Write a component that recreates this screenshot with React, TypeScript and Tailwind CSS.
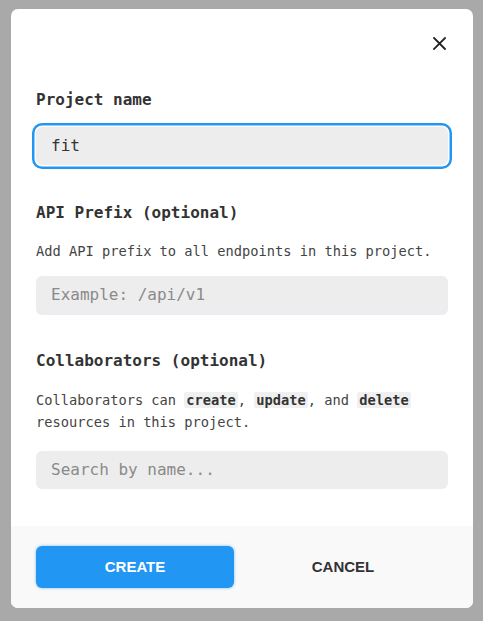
import React from "react";

const mono = { fontFamily: '"DejaVu Sans Mono", "Liberation Mono", monospace' };
const sans = { fontFamily: '"Liberation Sans", Arial, sans-serif' };

function Code({ children }: { children: React.ReactNode }) {
  return (
    <code className="bg-[#f0f0f0] rounded-[2px] px-[2px] font-bold text-[#333]" style={mono}>
      {children}
    </code>
  );
}

export default function App() {
  return (
    <div className="w-[483px] h-[621px] bg-[#a9a9a9] overflow-hidden pt-[9px] pl-[11px]" style={mono}>
      <div className="w-[462px] h-[599px] bg-white rounded-[7px] overflow-hidden flex flex-col">
        <div className="flex justify-end pt-[28px] pr-[27px]">
          <svg width="13" height="13" viewBox="0 0 13 13" className="block">
            <path d="M1 1 L12 12 M12 1 L1 12" stroke="#222" strokeWidth="1.8" strokeLinecap="square" />
          </svg>
        </div>
        <div className="px-[25px] flex flex-col">
          <div className="mt-[40px] text-[16px] leading-[20px] font-bold text-[#333]">Project name</div>
          <div className="mt-[17px] h-[38px] rounded-[6px] bg-[#ededed] flex items-center pl-[15px] text-[16px] text-[#333] shadow-[0_0_0_1.5px_#ffffff,0_0_0_4px_#2196f3]">
            fit
          </div>
          <div className="mt-[38px] text-[16px] leading-[20px] font-bold text-[#333]">API Prefix (optional)</div>
          <div className="mt-[17px] text-[13.7px] leading-[22px] text-[#444]">
            Add API prefix to all endpoints in this project.
          </div>
          <div className="mt-[14px] h-[38px] rounded-[6px] bg-[#ededed] flex items-center pl-[15px] text-[16px] text-[#8a8a8a] shadow-[0_1px_0_#e3eef8]">
            Example: /api/v1
          </div>
          <div className="mt-[37px] text-[16px] leading-[20px] font-bold text-[#333]">Collaborators (optional)</div>
          <div className="mt-[18px] text-[13.7px] leading-[22px] text-[#444]">
            Collaborators can <Code>create</Code>, <Code>update</Code>, and <Code>delete</Code> resources in this
            project.
          </div>
          <div className="mt-[18px] h-[38px] rounded-[6px] bg-[#ededed] flex items-center pl-[15px] text-[16px] text-[#8a8a8a]">
            Search by name...
          </div>
        </div>
        <div className="mt-[37px] flex-1 bg-[#f9f9f9] px-[25px] pt-[20px] flex items-start">
          <button
            className="w-[198px] h-[42px] rounded-[6px] bg-[#2196f3] text-white font-bold text-[15px] shadow-[0_0_3px_rgba(33,150,243,0.6)]"
            style={sans}
          >
            CREATE
          </button>
          <button className="flex-1 h-[42px] ml-[4px] text-[#333] font-bold text-[15px]" style={sans}>
            CANCEL
          </button>
        </div>
      </div>
    </div>
  );
}
